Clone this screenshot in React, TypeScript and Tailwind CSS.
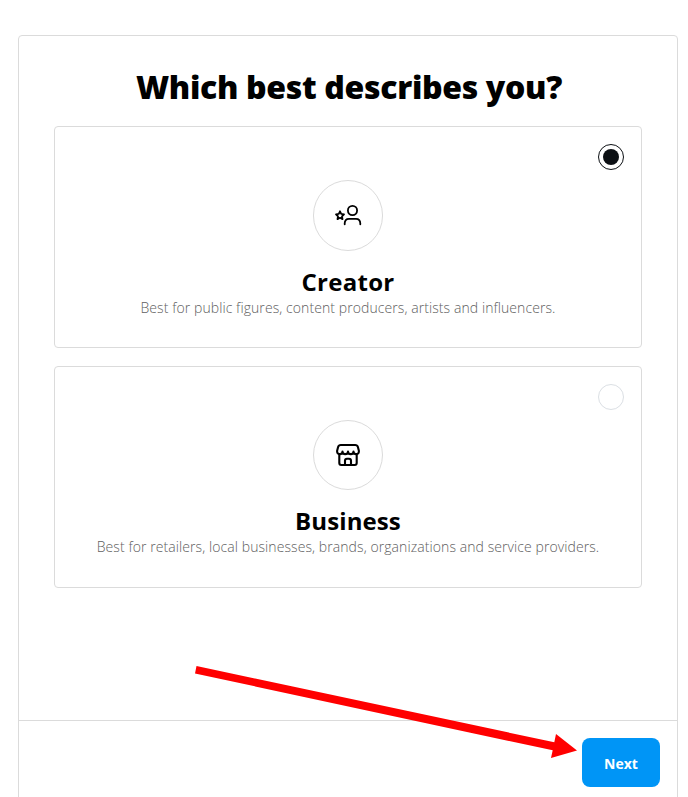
import { ReactNode } from 'react';

/**
 * Selectable account type card
 */
function OptionCard({
  title,
  description,
  icon,
  selected = false,
  iconClass = 'h-[70px]',
  titleClass = ''
}: {
  title: string;
  description: string;
  icon: ReactNode;
  selected?: boolean;
  iconClass?: string;
  titleClass?: string;
}) {
  return (
    <div className="h-[222px] border border-[#dbdbdb] rounded-[4px] pt-[17px] flex flex-col items-center">
      <div
        className={`w-[26px] h-[26px] shrink-0 self-end mr-[17px] rounded-full border flex items-center justify-center ${
          selected ? 'border-[#0c1014]' : 'border-[#dbdfe4]'
        }`}
      >
        {selected && <div className="w-4 h-4 rounded-full bg-[#0c1014]" />}
      </div>
      <div
        className={`w-[70px] shrink-0 mt-[10px] rounded-full border border-[#dbdbdb] flex items-center justify-center ${iconClass}`}
      >
        {icon}
      </div>
      <h2 className={`mt-[15px] text-2xl leading-8 font-bold whitespace-nowrap ${titleClass}`}>{title}</h2>
      <p className="text-[14px] leading-5 font-light tracking-[0.08px] text-[#606060] whitespace-nowrap">
        {description}
      </p>
    </div>
  );
}

function CreatorIcon() {
  return (
    <svg width="28" height="24" viewBox="0 0 28 24" fill="none" stroke="#000" strokeWidth="1.8" strokeLinecap="round" strokeLinejoin="round">
      <path d="M6 7.3l1.2 2.6 2.8.4-2 2 .5 2.8L6 13.800l-2.500 1.300.500-2.800-2-2 2.800-.400z" />
      <circle cx="18.5" cy="6.500" r="4.600" />
      <path d="M10.700 20.300v-.800c0-2.800 1.700-4.700 4.300-4.700h7c2.600 0 4.300 1.900 4.300 4.700v.800" />
    </svg>
  );
}

function BusinessIcon() {
  return (
    <svg width="24" height="24" viewBox="0 0 24 24" fill="none" stroke="#000" strokeWidth="2.1" strokeLinecap="round" strokeLinejoin="round">
      <path d="M3.3 11.2V20a2 2 0 0 0 2 2h13.4a2 2 0 0 0 2-2v-8.8" />
      <path d="M9 22v-4.300a2 2 0 0 1 2-2h2a2 2 0 0 1 2 2V22" />
      <path d="M4.800 2h14.400c1.500 0 2.300.7 2.700 2l.9 3.400c.4 2.200-.6 3.700-2.500 3.700-1.600 0-2.800-1.100-2.800-2.600 0 1.500-1.200 2.600-2.750 2.600S12 10 12 8.500c0 1.500-1.200 2.600-2.750 2.600S6.500 10 6.500 8.500c0 1.500-1.200 2.600-2.800 2.600-1.900 0-2.900-1.500-2.500-3.700L2.100 4c.4-1.300 1.200-2 2.700-2z" />
    </svg>
  );
}

export default function App() {
  return (
    <div className="relative h-[797px] overflow-hidden bg-white text-black pt-[35px] pl-[18px] pr-[10px] font-['Open_Sans','Noto_Sans',sans-serif]">
      <main className="h-[780px] border border-[#dbdbdb] rounded-[4px] flex flex-col">
        <section className="h-[684px] px-[35px] pt-[29px]">
          <h1 className="pl-0.5 text-[32px] leading-[44px] font-extrabold tracking-[-0.33px] text-center whitespace-nowrap">
            Which best describes you?
          </h1>
          <div className="mt-[17px] flex flex-col gap-[18px]">
            <OptionCard
              title="Creator"
              description="Best for public figures, content producers, artists and influencers."
              icon={<CreatorIcon />}
              iconClass="h-[71px]"
              titleClass="tracking-[0.3px]"
              selected
            />
            <OptionCard
              title="Business"
              description="Best for retailers, local businesses, brands, organizations and service providers."
              icon={<BusinessIcon />}
              titleClass="tracking-[0.1px]"
            />
          </div>
        </section>
        <footer className="border-t border-[#dbdbdb] pt-[17px] pr-[17px] flex justify-end">
          <button className="w-[78px] h-[49px] pt-0.5 rounded-lg bg-[#0095f6] text-white text-sm font-bold">
            Next
          </button>
        </footer>
      </main>

      {/* Pointer to the Next button */}
      <svg className="absolute left-0 top-0 pointer-events-none" width="688" height="797" viewBox="0 0 688 797">
        <path d="M196.500 666L554.300 742.300L556 734L577 750.500L551 758L552.700 750.300L195 673.500Z" fill="#ff0000" />
      </svg>
    </div>
  );
}
